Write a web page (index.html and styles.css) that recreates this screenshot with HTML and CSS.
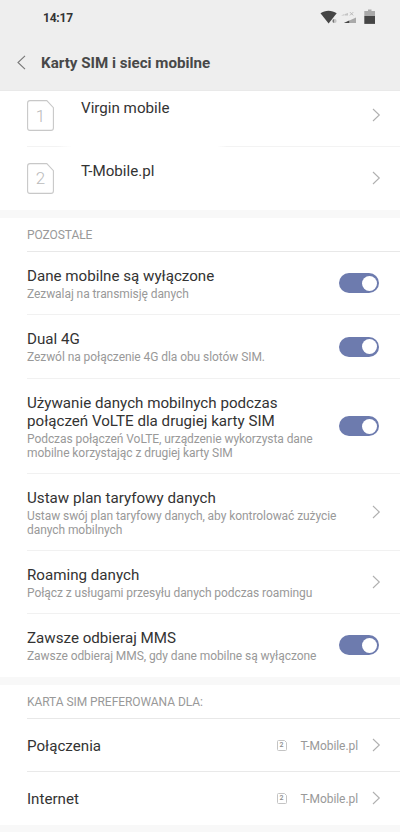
FILE: index.html
```html
<!DOCTYPE html>
<html lang="pl">
<head>
<meta charset="utf-8">
<title>Karty SIM i sieci mobilne</title>
<link rel="stylesheet" href="styles.css">
</head>
<body>
<svg class="defs" width="0" height="0">
  <symbol id="chev" viewBox="0 0 9 14"><path d="M1 1 7.3 7 1 13" fill="none" stroke="currentColor" stroke-width="1.1"/></symbol>
  <symbol id="card" viewBox="0 0 27 31"><path d="M3 .6H19.8L26.4 7.6V28Q26.4 30.4 24 30.4H3Q.6 30.4 .6 28V3Q.6 .6 3 .6Z" fill="none" stroke="#c8c8c8" stroke-width="1.1"/></symbol>
  <symbol id="minicard" viewBox="0 0 10 11"><path d="M1.5 .5H7.5L9.5 2.5V9.5Q9.5 10.5 8.5 10.5H1.5Q.5 10.5 .5 9.5V1.5Q.5 .5 1.5 .5Z" fill="none" stroke="#c4c4c4" stroke-width="1"/></symbol>
</svg>
<header class="top">
  <div class="status">
    <span class="time">14:17</span>
    <svg class="status-icons" width="56" height="16" viewBox="0 0 56 16">
      <path d="M.5 4.3C5 .9 12 .9 16.7 4.3L8.6 14.6Z" fill="#454545"/>
      <circle cx="14.6" cy="12" r="2.3" fill="#eee"/>
      <path d="M14.4 10A2 2 0 0 0 14.4 14Z" fill="#777"/><path d="M14.6 10A2 2 0 0 1 14.6 14Z" fill="#c4c4c4"/>
      <path d="M21 6.5 24.5 5V6.5ZM25 6.5V5L28 4V6.5Z" fill="#c4c4c4"/>
      <path d="M30 3.2 33.2 6.4M33.2 3.2 30 6.4" stroke="#b8b8b8" fill="none"/>
      <path d="M24 14 36 8.5V14Z" fill="#a9a9a9"/><path d="M24 14 29.2 11.6V14Z" fill="#454545"/>
      <path d="M48 .6H51.5V2H55V7H44.3V2H48Z" fill="#a9a9a9"/><path d="M44.3 7H55V14.9H44.3Z" fill="#454545"/>
    </svg>
  </div>
  <div class="bar">
    <svg class="back" width="9" height="15" viewBox="0 0 9 15"><path d="M8 .8 1 7.5 8 14.2" fill="none" stroke="#777" stroke-width="1.1"/></svg>
    <h1>Karty SIM i sieci mobilne</h1>
  </div>
</header>
<main>
  <section class="sims">
    <div class="row sim first">
      <div class="slot"><svg width="27" height="31"><use href="#card"/></svg><span>1</span></div>
      <div class="text"><div class="title">Virgin mobile</div></div>
      <svg class="chev"><use href="#chev"/></svg>
    </div>
    <div class="row sim">
      <div class="slot"><svg width="27" height="31"><use href="#card"/></svg><span>2</span></div>
      <div class="text"><div class="title">T-Mobile.pl</div></div>
      <svg class="chev"><use href="#chev"/></svg>
    </div>
  </section>
  <section>
    <h2>POZOSTAŁE</h2>
    <div class="row">
      <div class="text"><div class="title">Dane mobilne są wyłączone</div><div class="sub">Zezwalaj na transmisję danych</div></div>
      <span class="toggle"></span>
    </div>
    <div class="row tall">
      <div class="text"><div class="title">Dual 4G</div><div class="sub">Zezwól na połączenie 4G dla obu slotów SIM.</div></div>
      <span class="toggle"></span>
    </div>
    <div class="row volte">
      <div class="text"><div class="title">Używanie danych mobilnych podczas<br>połączeń VoLTE dla drugiej karty SIM</div><div class="sub">Podczas połączeń VoLTE, urządzenie wykorzysta dane<br>mobilne korzystając z drugiej karty SIM</div></div>
      <span class="toggle"></span>
    </div>
    <div class="row plan">
      <div class="text"><div class="title">Ustaw plan taryfowy danych</div><div class="sub">Ustaw swój plan taryfowy danych, aby kontrolować zużycie<br>danych mobilnych</div></div>
      <svg class="chev"><use href="#chev"/></svg>
    </div>
    <div class="row">
      <div class="text"><div class="title">Roaming danych</div><div class="sub">Połącz z usługami przesyłu danych podczas roamingu</div></div>
      <svg class="chev"><use href="#chev"/></svg>
    </div>
    <div class="row">
      <div class="text"><div class="title">Zawsze odbieraj MMS</div><div class="sub">Zawsze odbieraj MMS, gdy dane mobilne są wyłączone</div></div>
      <span class="toggle"></span>
    </div>
  </section>
  <section>
    <h2>KARTA SIM PREFEROWANA DLA:</h2>
    <div class="row pref">
      <div class="title">Połączenia</div>
      <div class="mini"><svg width="10" height="11"><use href="#minicard"/></svg><span>2</span></div>
      <div class="value">T-Mobile.pl</div>
      <svg class="chev"><use href="#chev"/></svg>
    </div>
    <div class="row pref">
      <div class="title">Internet</div>
      <div class="mini"><svg width="10" height="11"><use href="#minicard"/></svg><span>2</span></div>
      <div class="value">T-Mobile.pl</div>
      <svg class="chev"><use href="#chev"/></svg>
    </div>
  </section>
</main>
</body>
</html>
```
FILE: styles.css
```css
* { box-sizing: border-box; }
body { margin: 0; width: 400px; height: 832px; overflow: hidden; background: #f8f8f8; font-family: Roboto, sans-serif; color: #333; }
.defs { display: block; }
.top { height: 91px; background: #eee; border-bottom: 1px solid #e9e9e9; }
.status { height: 36px; padding: 0 24px 0 43px; display: flex; align-items: center; justify-content: space-between; }
.time { font-size: 12px; font-weight: 700; line-height: 14px; letter-spacing: -.2px; }
.status-icons { margin-bottom: 2px; }
.bar { height: 54px; padding: 0 17px 1px; display: flex; align-items: center; }
.back { margin: 0 15px 1px -.5px; }
h1 { margin: 0 0 0 .5px; font-size: 15.15px; font-weight: 700; line-height: 18px; color: #484848; white-space: nowrap; }
section { background: #fff; margin-bottom: 8px; padding-left: 27px; }
h2 { margin: 0; height: 34px; font-size: 12px; letter-spacing: -.06px; font-weight: 400; line-height: 34px; color: #999; border-bottom: 1px solid #e8e8e8; }
.row { height: 63px; padding-right: 19px; display: flex; align-items: center; justify-content: space-between; border-bottom: 1px solid #f1f1f1; white-space: nowrap; }
.row:last-child { border-bottom-color: transparent; }
.tall { height: 64px; }
.volte { height: 95px; }
.plan { height: 77px; }
.title { font-size: 15.15px; line-height: 18px; }
.sub { font-size: 12px; letter-spacing: -.07px; line-height: 14px; color: #999; margin: 2px 0 -1px; }
.chev { width: 9px; height: 14px; color: #b0b0b0; flex: none; }
.sim .text { flex: 1; margin-left: 27px; padding-bottom: 14px; }
.sims .first { height: 56px; padding-bottom: 8px; border-bottom: 0; background: linear-gradient(90deg, #f3f3f3 30px, #fff 45px, #fff 190px, #f3f3f3 200px) bottom / 100% 1px no-repeat; }
.slot { width: 27px; height: 31px; display: grid; place-items: center; }
.first .slot { margin-top: 1px; }
.slot > *, .mini > * { grid-area: 1 / 1; }
.slot span { font-size: 17px; line-height: 20px; font-weight: 300; color: #bbb; }
.toggle { width: 40px; height: 20px; margin-right: 2px; border-radius: 10px; background: #6d7bae; padding: 2.5px; display: flex; justify-content: flex-end; }
.toggle::before { content: ""; width: 15px; height: 15px; border-radius: 50%; background: #fff; }
.pref { height: 53px; border-bottom-color: #e9e9e9; }
.pref .title { flex: 1; padding-top: 2px; }
.mini { width: 10px; height: 11px; display: grid; place-items: center; margin-right: 14px; }
.mini span { font-size: 7px; line-height: 11px; font-weight: 500; color: #888; }
.value { font-size: 12px; letter-spacing: -.07px; line-height: 14px; color: #999; margin-right: 14px; padding-top: 1px; }
```
